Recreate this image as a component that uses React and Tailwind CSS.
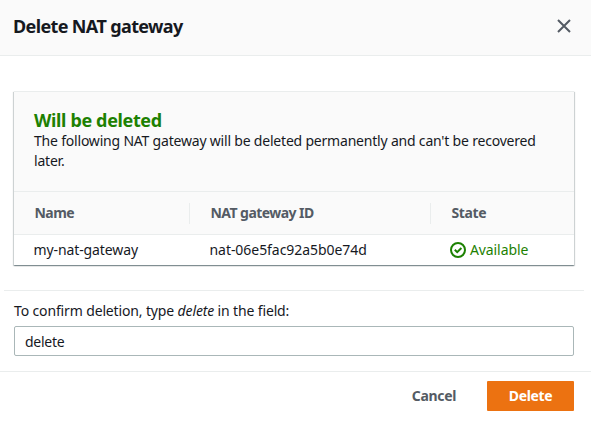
function CloseIcon() {
  return (
    <svg className="size-[14px]" viewBox="0 0 14 14" fill="none" stroke="#545b64" strokeWidth="2">
      <path d="M1 1l12 12M13 1L1 13" />
    </svg>
  );
}

function CheckIcon() {
  return (
    <svg className="size-4 shrink-0" viewBox="0 0 16 16" fill="none" stroke="#1d8102" strokeWidth="2">
      <circle cx="8" cy="8" r="7" />
      <path d="M4.8 7.8l2.4 2.4 4.2-4.2" />
    </svg>
  );
}

export default function App() {
  return (
    <div className="h-[421px] w-[591px] overflow-hidden bg-white font-['Noto_Sans','Open_Sans',sans-serif] text-sm whitespace-nowrap text-[#16191f]">
      <header className="flex h-14 items-center justify-between border-b border-[#eaeded] bg-[#fafafa] pr-5 pl-[13px]">
        <h1 className="-mt-1 text-[18px] leading-[22px] font-bold tracking-[-0.63px]">Delete NAT gateway</h1>
        <button className="-mt-1" aria-label="Close">
          <CloseIcon />
        </button>
      </header>

      <main className="pt-[35px]">
        <section className="mx-[14px] mr-[17px] h-[174px] border-t border-[#eaeded] bg-white shadow-[0_1px_1px_0_rgba(0,28,36,0.3),1px_1px_1px_0_rgba(0,28,36,0.15),-1px_1px_1px_0_rgba(0,28,36,0.15)]">
          <div className="h-[100px] border-b border-[#eaeded] bg-[#fafafa] pt-[17px] pl-5">
            <h2 className="text-[18px] leading-[22px] font-bold tracking-[-0.36px] text-[#1d8102]">Will be deleted</h2>
            <p className="leading-5 tracking-[-0.2px]">
              The following NAT gateway will be deleted permanently and can't be recovered
              <br />
              later.
            </p>
          </div>
          <div className="flex h-[43px] items-center border-b border-[#eaeded] bg-[#fafafa] font-bold tracking-[-0.55px] text-[#545b64]">
            <div className="flex h-[21px] w-[176px] items-center border-r border-[#eaeded] pl-[20.5px]">Name</div>
            <div className="flex h-[21px] w-[241px] items-center border-r border-[#eaeded] pl-[20.5px]">NAT gateway ID</div>
            <div className="pl-[20.5px] tracking-[-0.4px]">State</div>
          </div>
          <div className="flex h-[30px] items-center tracking-[-0.1px]">
            <div className="w-[176px] pl-[19.5px]">my-nat-gateway</div>
            <div className="w-[241px] pl-[19.5px] tracking-[-0.05px]">nat-06e5fac92a5b0e74d</div>
            <div className="flex items-center gap-1 pl-[19px] text-[#1d8102]">
              <CheckIcon />
              <span>Available</span>
            </div>
          </div>
        </section>

        <div className="mt-[25px] mr-[7px] ml-1 border-t border-[#eaeded]" />
        <div className="h-20 pt-[9px] pr-[17px] pl-[14px]">
          <label className="block leading-[22px] tracking-[-0.14px]" htmlFor="confirm">
            To confirm deletion, type <em>delete</em> in the field:
          </label>
          <input
            id="confirm"
            className="mt-1 block h-[30px] w-full rounded-[2px] border border-[#aab7b8] bg-white px-[10px] tracking-[-0.25px] outline-none"
            defaultValue="delete"
          />
        </div>
      </main>

      <footer className="flex items-start justify-end border-t border-[#eaeded] pt-[9px] pr-[17px] font-bold">
        <button className="h-[30px] px-[31px] tracking-[-0.35px] text-[#545b64]">Cancel</button>
        <button className="h-[30px] w-[87px] rounded-[1px] bg-[#ec7211] tracking-[-0.35px] text-white">Delete</button>
      </footer>
    </div>
  );
}
